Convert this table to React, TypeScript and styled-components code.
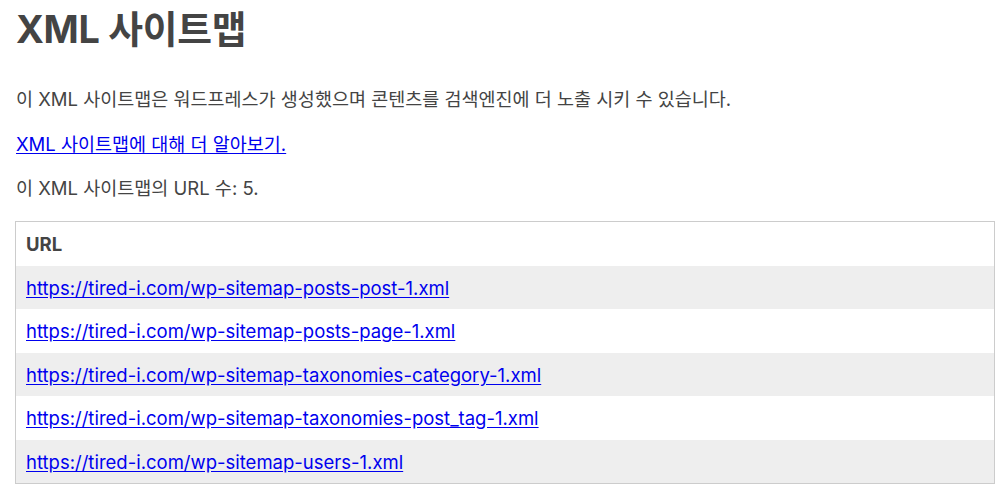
import React from "react";
import styled, { createGlobalStyle } from "styled-components";

const Global = createGlobalStyle`
  html, body { margin: 0; padding: 0; background: #fff; }
  body {
    font-family: "Inter", "Noto Sans CJK KR", sans-serif;
    color: #444;
  }
`;

const Sitemap = styled.div`
  width: 980px;
  margin: 0 0 0 15px;
  display: flex;
  flex-direction: column;
`;

const Title = styled.h1`
  font-size: 37.8px;
  font-weight: 700;
  line-height: 48px;
  margin: 5px 0 0 0;
  padding-left: 1px;
  letter-spacing: -0.3px;
`;

const Text = styled.p`
  font-size: 18.5px;
  line-height: 24px;
  margin: 0;
  padding-left: 1px;
`;

const Intro = styled.div`
  display: flex;
  flex-direction: column;
  gap: 20.5px;
  margin-top: 34px;
`;

const Link = styled.a`
  color: #0000ee;
  text-decoration: underline;
  text-underline-offset: 2px;
`;

const Table = styled.table`
  width: 980px;
  margin-top: 21px;
  border: 1px solid #ccc;
  border-collapse: collapse;
  font-size: 18.5px;
`;

const Th = styled.th`
  text-align: left;
  padding: 10px;
  line-height: 24px;
  font-weight: 700;
`;

const Row = styled.tr<{ $odd: boolean }>`
  background: ${(p) => (p.$odd ? "#eee" : "#fff")};
`;

const Td = styled.td`
  padding: 11px 10px 9px;
  line-height: 23.4px;
`;

const urls = [
  "https://tired-i.com/wp-sitemap-posts-post-1.xml",
  "https://tired-i.com/wp-sitemap-posts-page-1.xml",
  "https://tired-i.com/wp-sitemap-taxonomies-category-1.xml",
  "https://tired-i.com/wp-sitemap-taxonomies-post_tag-1.xml",
  "https://tired-i.com/wp-sitemap-users-1.xml",
];

export default function App() {
  return (
    <>
      <Global />
      <Sitemap>
        <Title>XML 사이트맵</Title>
        <Intro>
          <Text>이 XML 사이트맵은 워드프레스가 생성했으며 콘텐츠를 검색엔진에 더 노출 시키 수 있습니다.</Text>
          <Text>
            <Link href="#">XML 사이트맵에 대해 더 알아보기.</Link>
          </Text>
          <Text>이 XML 사이트맵의 URL 수: 5.</Text>
        </Intro>
        <Table>
          <thead>
            <tr>
              <Th>URL</Th>
            </tr>
          </thead>
          <tbody>
            {urls.map((u, i) => (
              <Row key={u} $odd={i % 2 === 0}>
                <Td>
                  <Link href="#">{u}</Link>
                </Td>
              </Row>
            ))}
          </tbody>
        </Table>
      </Sitemap>
    </>
  );
}
